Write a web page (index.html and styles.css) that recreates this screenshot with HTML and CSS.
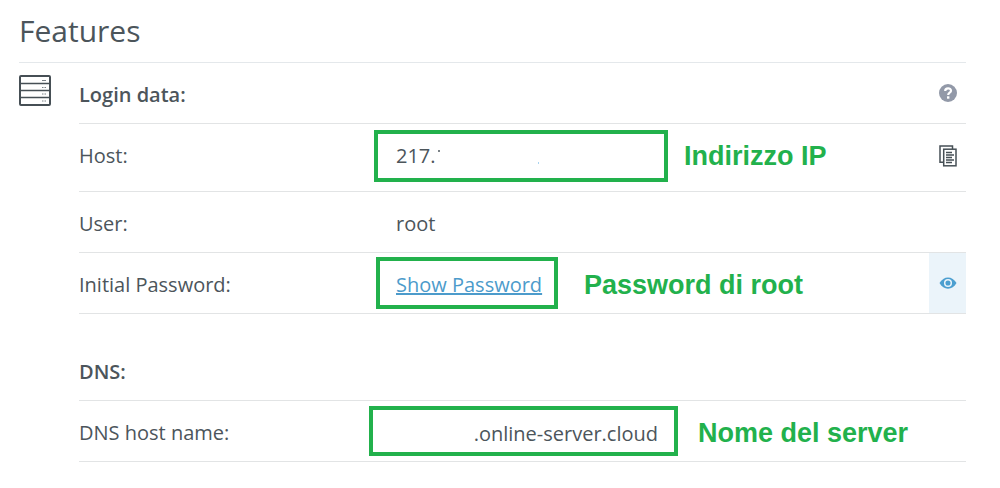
FILE: index.html
```html
<!DOCTYPE html>
<html lang="en">
<head>
  <meta charset="UTF-8">
  <title>Features</title>
  <link rel="stylesheet" href="styles.css">
</head>
<body>

  <main class="features">
    <h1>Features</h1>

    <div class="feature">
      <svg class="server-icon" width="32" height="32" viewBox="0 0 32 32" fill="none" stroke="#464f55">
        <rect x="1" y="1" width="30" height="29" rx="1" stroke-width="2"/>
        <path d="M2 8.500h28M2 15.500h28M2 22.500h28" stroke-width="1.300"/>
        <path d="M23 5.500h4M23 12.500h1.500M25.500 12.500h1.500M23 19h1.500M25.500 19h1.500M23 26h1.500M25.500 26h1.500" stroke="#7b8287"/>
      </svg>

      <div class="sections">
        <section>
          <div class="row">
            <h2>Login data:</h2>
            <button class="icon-button" type="button" aria-label="Help">
              <svg width="18" height="18" viewBox="0 0 18 18">
                <circle cx="9" cy="9" r="9" fill="#9299a8"/>
                <path d="M6.200 7C6.200 3.700 12 3.500 12 6.800C12 8.800 9.200 8.700 9.200 11" fill="none" stroke="#fff" stroke-width="2.200"/>
                <rect x="8" y="12.300" width="2.400" height="2.400" fill="#fff"/>
              </svg>
            </button>
          </div>
          <div class="row row-tall">
            <span class="label">Host:</span>
            <span class="value box box-host">217.</span>
            <strong class="note">Indirizzo IP</strong>
            <button class="icon-button" type="button" aria-label="Copy host">
              <svg width="18" height="22" viewBox="0 0 18 22" fill="none" stroke="#464f55">
                <path d="M4 17.200H1V1h12.500v3" stroke-width="1.500"/>
                <rect x="4.700" y="4.200" width="12.300" height="16.600" stroke-width="1.500"/>
                <path d="M7 7.500h6M7 10h8M7 12.500h6M7 15h8M7 17.500h6" stroke-width="1.300"/>
              </svg>
            </button>
          </div>
          <div class="row">
            <span class="label">User:</span>
            <span class="value plain">root</span>
          </div>
          <div class="row">
            <span class="label">Initial Password:</span>
            <span class="value box box-password"><a href="#">Show Password</a></span>
            <strong class="note">Password di root</strong>
            <button class="icon-button active" type="button" aria-label="Show password">
              <svg width="18" height="14" viewBox="0 0 18 14">
                <path d="M0.500 7C4.500-.5 13.500-.5 17.500 7C13.500 14.500 4.500 14.500.5 7z" fill="#4c9fd0"/>
                <circle cx="9" cy="7" r="3.300" fill="none" stroke="#ebf4fa" stroke-width="1.500"/>
              </svg>
            </button>
          </div>
        </section>

        <section>
          <div class="row">
            <h2>DNS:</h2>
          </div>
          <div class="row">
            <span class="label">DNS host name:</span>
            <span class="value box box-dns">.online-server.cloud</span>
            <strong class="note">Nome del server</strong>
          </div>
        </section>
      </div>
    </div>
  </main>

</body>
</html>
```

FILE: styles.css
```css
* {
  box-sizing: border-box;
}
body {
  margin: 0;
  background: #fff;
  color: #4c555b;
  font-family: "Open Sans", sans-serif;
  font-size: 20px;
  line-height: 28px;
}
.features {
  padding: 10px 34px 24px 19px;
}
h1 {
  margin: 0;
  padding-bottom: 10px;
  border-bottom: 1px solid #e4e8eb;
  font-size: 30px;
  font-weight: 400;
  line-height: 42px;
}
h2 {
  margin: 0;
  padding-top: 4px;
  font-size: 20px;
  font-weight: 600;
}
.feature {
  display: flex;
  gap: 28px;
}
.server-icon {
  flex: none;
  margin-top: 12px;
}
.sections {
  flex: 1;
  display: grid;
  gap: 26px;
}
.row {
  display: flex;
  align-items: center;
  height: 61px;
  border-bottom: 1px solid #e2e4e5;
}
.label,
.plain,
.note {
  padding-top: 4px;
}
.label {
  flex: none;
  width: 290px;
}
.plain {
  margin-left: 27px;
}
.box {
  position: relative;
  flex: none;
  height: 52px;
  padding: 10px 16px 6px;
  border: 4px solid #22b14c;
  white-space: nowrap;
}
.box-host {
  width: 294px;
  margin-left: 5px;
  padding-left: 18px;
}
/* what is left of the blanked address */
.box-host::before,
.box-host::after {
  content: "";
  position: absolute;
  top: 16px;
  left: 60px;
  width: 2px;
  height: 2px;
  background: #7b8287;
}
.box-host::after {
  top: 28px;
  left: 160px;
  width: 1px;
  background: #a9d4f0;
}
.box-password {
  width: 182px;
  margin-left: 7px;
}
.box-dns {
  width: 309px;
  height: 50px;
  text-align: right;
}
.note {
  margin-left: 16px;
  color: #22b14c;
  font-family: "Liberation Sans", Arial, sans-serif;
  font-size: 27px;
}
.box-password + .note {
  margin-left: 26px;
}
.box-dns + .note {
  margin-left: 20px;
}
.row-tall {
  height: 68px;
  padding-bottom: 4px;
}
.row-tall .label,
.row-tall .note {
  padding-top: 0;
}
.row-tall .box {
  padding-top: 8px;
}
a {
  color: #4c9bcb;
  text-decoration-thickness: 2px;
}
.icon-button {
  display: flex;
  align-items: center;
  justify-content: center;
  width: 37px;
  height: 100%;
  margin-left: auto;
  padding: 0;
  border: 0;
  background: none;
  cursor: pointer;
}
.active {
  background: #ebf4fa;
}
```
